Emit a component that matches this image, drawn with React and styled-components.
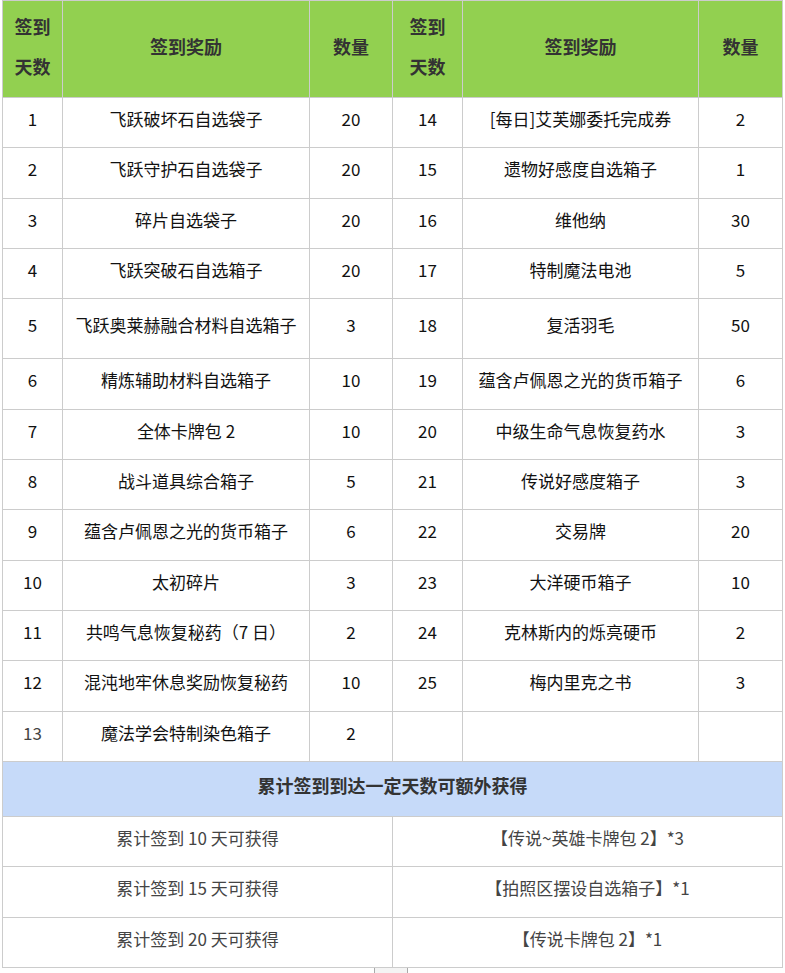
import styled, { createGlobalStyle } from 'styled-components'

const GlobalStyle = createGlobalStyle`
  html, body {
    margin: 0;
    padding: 0;
    background: #fff;
  }
`

const Page = styled.div`
  padding: 0 2px;
  font-family: "Noto Sans CJK SC", "Noto Sans", sans-serif;
`

const Table = styled.table`
  width: 781px;
  border-collapse: collapse;
  table-layout: fixed;
`

const HeadCell = styled.th`
  background: #92d050;
  border: 1px solid #cccccc;
  color: #333;
  font-size: 18px;
  font-weight: bold;
  line-height: 40px;
  height: 90px;
  padding: 0 6px 6px;
  text-align: center;
  vertical-align: middle;
`

const Row = styled.tr`
  height: ${p => p.$h || 50.33}px;
`

const Cell = styled.td`
  border: 1px solid #cccccc;
  color: ${p => p.$muted ? '#444' : '#111'};
  font-size: 17px;
  line-height: 24px;
  padding: 0 4px 7px;
  text-align: center;
  vertical-align: middle;
  white-space: nowrap;
`

const SectionCell = styled.td`
  background: #c6daf9;
  border: 1px solid #cccccc;
  color: #333;
  font-size: 18px;
  font-weight: bold;
  padding: 0 0 8px;
  text-align: center;
  vertical-align: middle;
`

const ScrollThumb = styled.div`
  width: 32px;
  height: 6px;
  margin-left: 372px;
  background: #f4f4f4;
  border-left: 1px solid #aaa;
  border-right: 1px solid #aaa;
`

const left = [
  [1, '飞跃破坏石自选袋子', 20],
  [2, '飞跃守护石自选袋子', 20],
  [3, '碎片自选袋子', 20],
  [4, '飞跃突破石自选箱子', 20],
  [5, '飞跃奥莱赫融合材料自选箱子', 3],
  [6, '精炼辅助材料自选箱子', 10],
  [7, '全体卡牌包 2', 10],
  [8, '战斗道具综合箱子', 5],
  [9, '蕴含卢佩恩之光的货币箱子', 6],
  [10, '太初碎片', 3],
  [11, '共鸣气息恢复秘药（7 日）', 2],
  [12, '混沌地牢休息奖励恢复秘药', 10],
  [13, '魔法学会特制染色箱子', 2],
]

const right = [
  [14, '[每日]艾芙娜委托完成券', 2],
  [15, '遗物好感度自选箱子', 1],
  [16, '维他纳', 30],
  [17, '特制魔法电池', 5],
  [18, '复活羽毛', 50],
  [19, '蕴含卢佩恩之光的货币箱子', 6],
  [20, '中级生命气息恢复药水', 3],
  [21, '传说好感度箱子', 3],
  [22, '交易牌', 20],
  [23, '大洋硬币箱子', 10],
  [24, '克林斯内的烁亮硬币', 2],
  [25, '梅内里克之书', 3],
]

const bonus = [
  ['累计签到 10 天可获得', '【传说~英雄卡牌包 2】*3'],
  ['累计签到 15 天可获得', '【拍照区摆设自选箱子】*1'],
  ['累计签到 20 天可获得', '【传说卡牌包 2】*1'],
]

const App = () => {
  return (
    <Page>
      <GlobalStyle />
      <Table>
        <colgroup>
          <col style={{ width: 60 }} />
          <col style={{ width: 247 }} />
          <col style={{ width: 83 }} />
          <col style={{ width: 70 }} />
          <col style={{ width: 236 }} />
          <col style={{ width: 84 }} />
        </colgroup>
        <thead>
          <tr>
            <HeadCell>签到<br />天数</HeadCell>
            <HeadCell>签到奖励</HeadCell>
            <HeadCell>数量</HeadCell>
            <HeadCell>签到<br />天数</HeadCell>
            <HeadCell>签到奖励</HeadCell>
            <HeadCell>数量</HeadCell>
          </tr>
        </thead>
        <tbody>
          {left.map((l, i) => {
            const r = right[i]
            return (
              <Row key={l[0]} $h={i === 4 ? 60 : undefined}>
                <Cell $muted={l[0] === 13}>{l[0]}</Cell>
                <Cell>{l[1]}</Cell>
                <Cell>{l[2]}</Cell>
                <Cell>{r ? r[0] : ''}</Cell>
                <Cell>{r ? r[1] : ''}</Cell>
                <Cell>{r ? r[2] : ''}</Cell>
              </Row>
            )
          })}
          <Row $h={55}>
            <SectionCell colSpan={6}>累计签到到达一定天数可额外获得</SectionCell>
          </Row>
          {bonus.map(b => (
            <Row key={b[0]}>
              <Cell $muted colSpan={3}>{b[0]}</Cell>
              <Cell $muted colSpan={3}>{b[1]}</Cell>
            </Row>
          ))}
        </tbody>
      </Table>
      <ScrollThumb />
    </Page>
  )
}

export default App
